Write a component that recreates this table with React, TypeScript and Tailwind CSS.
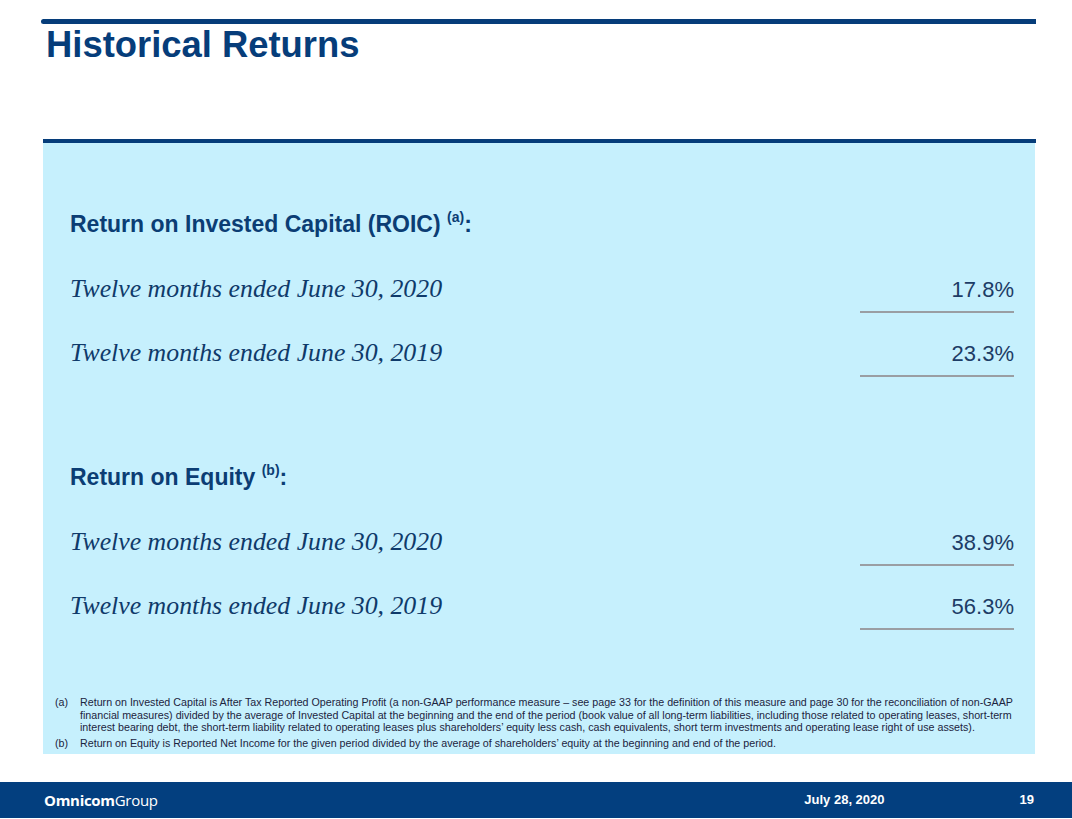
const sans = { fontFamily: '"Liberation Sans", Arial, sans-serif' }

type Row = { label: string; value: string }

const roic: Row[] = [
  { label: 'Twelve months ended June 30, 2020', value: '17.8%' },
  { label: 'Twelve months ended June 30, 2019', value: '23.3%' },
]

const roe: Row[] = [
  { label: 'Twelve months ended June 30, 2020', value: '38.9%' },
  { label: 'Twelve months ended June 30, 2019', value: '56.3%' },
]

function Heading({ text, note, className }: { text: string; note: string; className: string }) {
  return (
    <div className={`pl-[27px] text-[23px] leading-[28px] font-bold text-[#0b3d74] ${className}`}>
      {text} <sup className="text-[14px] top-[-0.68em]">({note})</sup>:
    </div>
  )
}

function ReturnRow({ row, first }: { row: Row; first: boolean }) {
  return (
    <div className={`flex items-baseline justify-between pl-[27px] pr-[21px] ${first ? 'mt-[38px]' : 'mt-[27px]'}`}>
      <span className="font-['Liberation_Serif',serif] italic text-[25.8px] leading-[26px] text-[#0f3a6a]">
        {row.label}
      </span>
      <div className="w-[154px] text-right text-[22px] leading-[26px] pb-[8px] border-b-2 border-[#9a9ea3] text-[#1d3c66]">
        {row.value}
      </div>
    </div>
  )
}

export default function App() {
  return (
    <div className="w-[1072px] h-[819px] bg-white flex flex-col" style={sans}>
      <div className="h-[139px] pt-[19px] pl-[41px] pr-[36px]">
        <div className="h-[5px] bg-[#063d7a] rounded-l-full" />
        <h1 className="mt-[3px] ml-[5px] text-[36.4px] leading-[36px] font-bold text-[#063d7a]">Historical Returns</h1>
      </div>

      <div className="ml-[43px] w-[993px]">
        <div className="h-[4px] bg-[#063d7a]" />
        <div className="w-[992px] h-[611px] bg-[#c6f0fd] pt-[67px]">
          <Heading text="Return on Invested Capital (ROIC)" note="a" className="" />
          {roic.map((r, i) => (
            <ReturnRow key={r.value} row={r} first={i === 0} />
          ))}

          <Heading text="Return on Equity" note="b" className="mt-[86px]" />
          {roe.map((r, i) => (
            <ReturnRow key={r.value} row={r} first={i === 0} />
          ))}

          <div className="mt-[66px] pl-[12px] text-[10.7px] leading-[12.6px] text-[#1c2440] whitespace-nowrap">
            <div className="flex">
              <span className="w-[25px] shrink-0">(a)</span>
              <span>
                Return on Invested Capital is After Tax Reported Operating Profit (a non-GAAP performance measure – see page 33 for the definition of this measure and page 30 for the reconciliation of non-GAAP
                <br />
                financial measures) divided by the average of Invested Capital at the beginning and the end of the period (book value of all long-term liabilities, including those related to operating leases, short-term
                <br />
                interest bearing debt, the short-term liability related to operating leases plus shareholders’ equity less cash, cash equivalents, short term investments and operating lease right of use assets).
              </span>
            </div>
            <div className="flex mt-[3px]">
              <span className="w-[25px] shrink-0">(b)</span>
              <span>Return on Equity is Reported Net Income for the given period divided by the average of shareholders’ equity at the beginning and end of the period.</span>
            </div>
          </div>
        </div>
      </div>

      <div className="mt-[28px] h-[36px] bg-[#033f7f] flex items-center justify-between pl-[44px] pr-[38px] text-white">
        <div className="font-['Open_Sans',sans-serif] text-[15px] tracking-[-0.3px]">
          <span className="font-bold">Omnicom</span>
          <span>Group</span>
        </div>
        <div className="flex items-center gap-[135px] text-[13px] font-bold">
          <span>July 28, 2020</span>
          <span>19</span>
        </div>
      </div>
    </div>
  )
}
